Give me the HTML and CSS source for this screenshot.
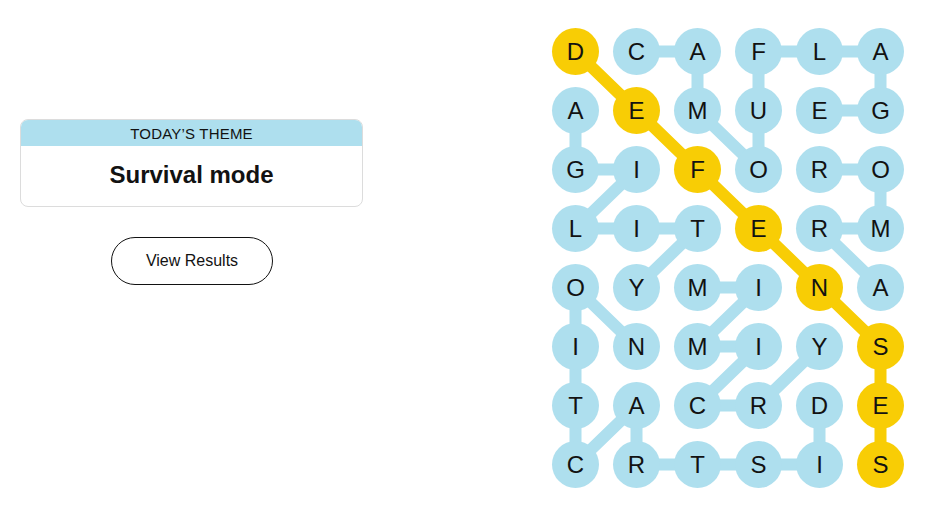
FILE: index.html
```html
<!DOCTYPE html>
<html lang="en">
<head>
<meta charset="utf-8">
<title>Strands</title>
<link rel="stylesheet" href="styles.css">
</head>
<body>
<div class="page">
  <div class="side">
    <div class="theme-card">
      <div class="theme-head">TODAY’S THEME</div>
      <div class="theme-body">Survival mode</div>
    </div>
    <button class="results-btn">View Results</button>
  </div>
  <div class="board">
    <svg class="board-svg" width="366" height="472" viewBox="0 0 366 472">
      <g class="links" fill="none" stroke-width="12" stroke-linejoin="round" stroke-linecap="round">
        <polyline class="blue" points="91.5,29.5 152.5,29.5 152.5,88.5 213.5,147.5 213.5,88.5 213.5,29.5 274.5,29.5 335.5,29.5 335.5,88.5 274.5,88.5"/>
        <polyline class="blue" points="30.5,88.5 30.5,147.5 91.5,147.5 30.5,206.5 91.5,206.5 152.5,206.5 91.5,265.5"/>
        <polyline class="blue" points="335.5,265.5 274.5,206.5 335.5,206.5 335.5,147.5 274.5,147.5"/>
        <polyline class="blue" points="274.5,383.5 274.5,442.5 213.5,442.5 152.5,442.5 91.5,442.5 91.5,383.5 30.5,442.5 30.5,383.5 30.5,324.5 30.5,265.5 91.5,324.5"/>
        <polyline class="blue" points="152.5,265.5 213.5,265.5 152.5,324.5 213.5,324.5 152.5,383.5 213.5,383.5 274.5,324.5"/>
        <polyline class="gold" points="30.5,29.5 91.5,88.5 152.5,147.5 213.5,206.5 274.5,265.5 335.5,324.5 335.5,383.5 335.5,442.5"/>
      </g>
      <g class="dots">
        <circle class="g" cx="30.5" cy="29.5" r="23.5"/><circle cx="91.5" cy="29.5" r="23.5"/><circle cx="152.5" cy="29.5" r="23.5"/><circle cx="213.5" cy="29.5" r="23.5"/><circle cx="274.5" cy="29.5" r="23.5"/><circle cx="335.5" cy="29.5" r="23.5"/>
        <circle cx="30.5" cy="88.5" r="23.5"/><circle class="g" cx="91.5" cy="88.5" r="23.5"/><circle cx="152.5" cy="88.5" r="23.5"/><circle cx="213.5" cy="88.5" r="23.5"/><circle cx="274.5" cy="88.5" r="23.5"/><circle cx="335.5" cy="88.5" r="23.5"/>
        <circle cx="30.5" cy="147.5" r="23.5"/><circle cx="91.5" cy="147.5" r="23.5"/><circle class="g" cx="152.5" cy="147.5" r="23.5"/><circle cx="213.5" cy="147.5" r="23.5"/><circle cx="274.5" cy="147.5" r="23.5"/><circle cx="335.5" cy="147.5" r="23.5"/>
        <circle cx="30.5" cy="206.5" r="23.5"/><circle cx="91.5" cy="206.5" r="23.5"/><circle cx="152.5" cy="206.5" r="23.5"/><circle class="g" cx="213.5" cy="206.5" r="23.5"/><circle cx="274.5" cy="206.5" r="23.5"/><circle cx="335.5" cy="206.5" r="23.5"/>
        <circle cx="30.5" cy="265.5" r="23.5"/><circle cx="91.5" cy="265.5" r="23.5"/><circle cx="152.5" cy="265.5" r="23.5"/><circle cx="213.5" cy="265.5" r="23.5"/><circle class="g" cx="274.5" cy="265.5" r="23.5"/><circle cx="335.5" cy="265.5" r="23.5"/>
        <circle cx="30.5" cy="324.5" r="23.5"/><circle cx="91.5" cy="324.5" r="23.5"/><circle cx="152.5" cy="324.5" r="23.5"/><circle cx="213.5" cy="324.5" r="23.5"/><circle cx="274.5" cy="324.5" r="23.5"/><circle class="g" cx="335.5" cy="324.5" r="23.5"/>
        <circle cx="30.5" cy="383.5" r="23.5"/><circle cx="91.5" cy="383.5" r="23.5"/><circle cx="152.5" cy="383.5" r="23.5"/><circle cx="213.5" cy="383.5" r="23.5"/><circle cx="274.5" cy="383.5" r="23.5"/><circle class="g" cx="335.5" cy="383.5" r="23.5"/>
        <circle cx="30.5" cy="442.5" r="23.5"/><circle cx="91.5" cy="442.5" r="23.5"/><circle cx="152.5" cy="442.5" r="23.5"/><circle cx="213.5" cy="442.5" r="23.5"/><circle cx="274.5" cy="442.5" r="23.5"/><circle class="g" cx="335.5" cy="442.5" r="23.5"/>
      </g>
      <g class="letters" text-anchor="middle">
        <text x="30.5" y="38">D</text><text x="91.5" y="38">C</text><text x="152.5" y="38">A</text><text x="213.5" y="38">F</text><text x="274.5" y="38">L</text><text x="335.5" y="38">A</text>
        <text x="30.5" y="97">A</text><text x="91.5" y="97">E</text><text x="152.5" y="97">M</text><text x="213.5" y="97">U</text><text x="274.5" y="97">E</text><text x="335.5" y="97">G</text>
        <text x="30.5" y="156">G</text><text x="91.5" y="156">I</text><text x="152.5" y="156">F</text><text x="213.5" y="156">O</text><text x="274.5" y="156">R</text><text x="335.5" y="156">O</text>
        <text x="30.5" y="215">L</text><text x="91.5" y="215">I</text><text x="152.5" y="215">T</text><text x="213.5" y="215">E</text><text x="274.5" y="215">R</text><text x="335.5" y="215">M</text>
        <text x="30.5" y="274">O</text><text x="91.5" y="274">Y</text><text x="152.5" y="274">M</text><text x="213.5" y="274">I</text><text x="274.5" y="274">N</text><text x="335.5" y="274">A</text>
        <text x="30.5" y="333">I</text><text x="91.5" y="333">N</text><text x="152.5" y="333">M</text><text x="213.5" y="333">I</text><text x="274.5" y="333">Y</text><text x="335.5" y="333">S</text>
        <text x="30.5" y="392">T</text><text x="91.5" y="392">A</text><text x="152.5" y="392">C</text><text x="213.5" y="392">R</text><text x="274.5" y="392">D</text><text x="335.5" y="392">E</text>
        <text x="30.5" y="451">C</text><text x="91.5" y="451">R</text><text x="152.5" y="451">T</text><text x="213.5" y="451">S</text><text x="274.5" y="451">I</text><text x="335.5" y="451">S</text>
      </g>
    </svg>
  </div>
</div>
</body>
</html>
```

FILE: styles.css
```css
* { box-sizing: border-box; }
html, body {
  margin: 0;
  padding: 0;
  background: #ffffff;
  font-family: "Liberation Sans", Arial, sans-serif;
  color: #121212;
}
.page {
  display: flex;
  align-items: flex-start;
  width: 933px;
  height: 525px;
}
.side {
  width: 363px;
  padding-left: 20px;
  padding-top: 119px;
  display: flex;
  flex-direction: column;
  align-items: center;
}
.theme-card {
  width: 343px;
  height: 88px;
  border: 1px solid #dcdcdc;
  border-radius: 8px;
  overflow: hidden;
  display: flex;
  flex-direction: column;
}
.theme-head {
  height: 26px;
  background: #aedfee;
  display: flex;
  align-items: center;
  justify-content: center;
  font-size: 15px;
  letter-spacing: 0.2px;
  font-weight: 400;
  color: #121212;
  padding-top: 1px;
}
.theme-body {
  flex: 1;
  display: flex;
  align-items: center;
  justify-content: center;
  font-size: 24px;
  font-weight: 700;
  color: #121212;
  padding-bottom: 2px;
}
.results-btn {
  margin-top: 30px;
  width: 162px;
  height: 48px;
  border: 1px solid #121212;
  border-radius: 24px;
  background: #ffffff;
  font-family: "Liberation Sans", Arial, sans-serif;
  font-size: 16px;
  color: #121212;
  padding: 0 0 0 1px;
}
.board {
  margin-left: 182px;
  padding-top: 22px;
}
.board-svg { display: block; }
.links .blue { stroke: #aedfee; }
.links .gold { stroke: #f8cd05; }
.dots circle { fill: #aedfee; }
.dots circle.g { fill: #f8cd05; }
.letters text {
  font-family: "Liberation Sans", Arial, sans-serif;
  font-size: 24px;
  fill: #121212;
}
```
